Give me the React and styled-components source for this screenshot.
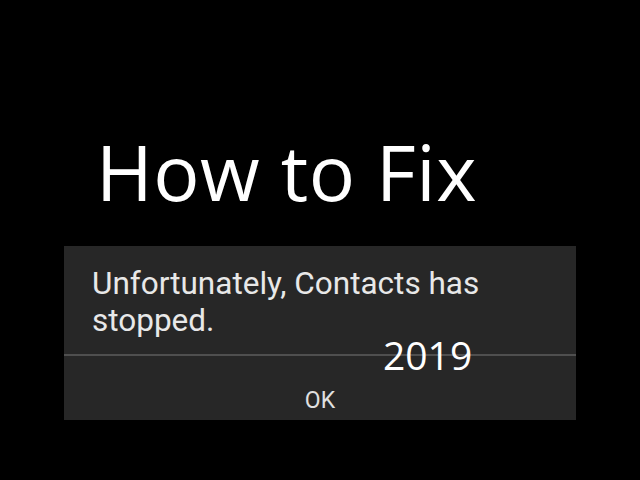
import React from "react";
import styled, { createGlobalStyle } from "styled-components";

const GlobalStyle = createGlobalStyle`
  html, body {
    margin: 0;
    padding: 0;
    background: #000;
  }
  body {
    width: 640px;
    height: 480px;
    overflow: hidden;
  }
`;

const Screen = styled.div`
  width: 640px;
  height: 480px;
  background: #000;
  display: flex;
  flex-direction: column;
  padding-top: 134px;
  box-sizing: border-box;
`;

const Title = styled.h1`
  margin: 0 0 0 96px;
  font-family: "Open Sans", sans-serif;
  font-weight: 400;
  font-size: 77px;
  line-height: 76px;
  color: #fff;
  letter-spacing: 0.5px;
`;

const Dialog = styled.div`
  position: relative;
  margin: 36px 0 0 64px;
  width: 512px;
  height: 174px;
  background: #272727;
  display: flex;
  flex-direction: column;
`;

const Message = styled.p`
  margin: 0;
  padding: 19px 0 0 28px;
  height: 108px;
  box-sizing: border-box;
  font-family: Roboto, "Liberation Sans", sans-serif;
  font-size: 31.5px;
  line-height: 37px;
  color: #e8e8e8;
`;

const Divider = styled.div`
  height: 2px;
  background: #4f4f4f;
`;

const OkButton = styled.div`
  flex: 1;
  display: flex;
  align-items: center;
  justify-content: center;
  padding-top: 24px;
  font-family: Roboto, "Liberation Sans", sans-serif;
  font-size: 23px;
  color: #e0e0e0;
`;

const Year = styled.span`
  position: absolute;
  left: 319px;
  top: 89px;
  font-family: "Open Sans", sans-serif;
  font-size: 39px;
  line-height: 39px;
  color: #fff;
`;

const App = () => {
  return (
    <Screen>
      <GlobalStyle />
      <Title>How to Fix</Title>
      <Dialog>
        <Message>
          Unfortunately, Contacts has
          <br />
          stopped.
        </Message>
        <Divider />
        <OkButton>OK</OkButton>
        <Year>2019</Year>
      </Dialog>
    </Screen>
  );
};

export default App;
